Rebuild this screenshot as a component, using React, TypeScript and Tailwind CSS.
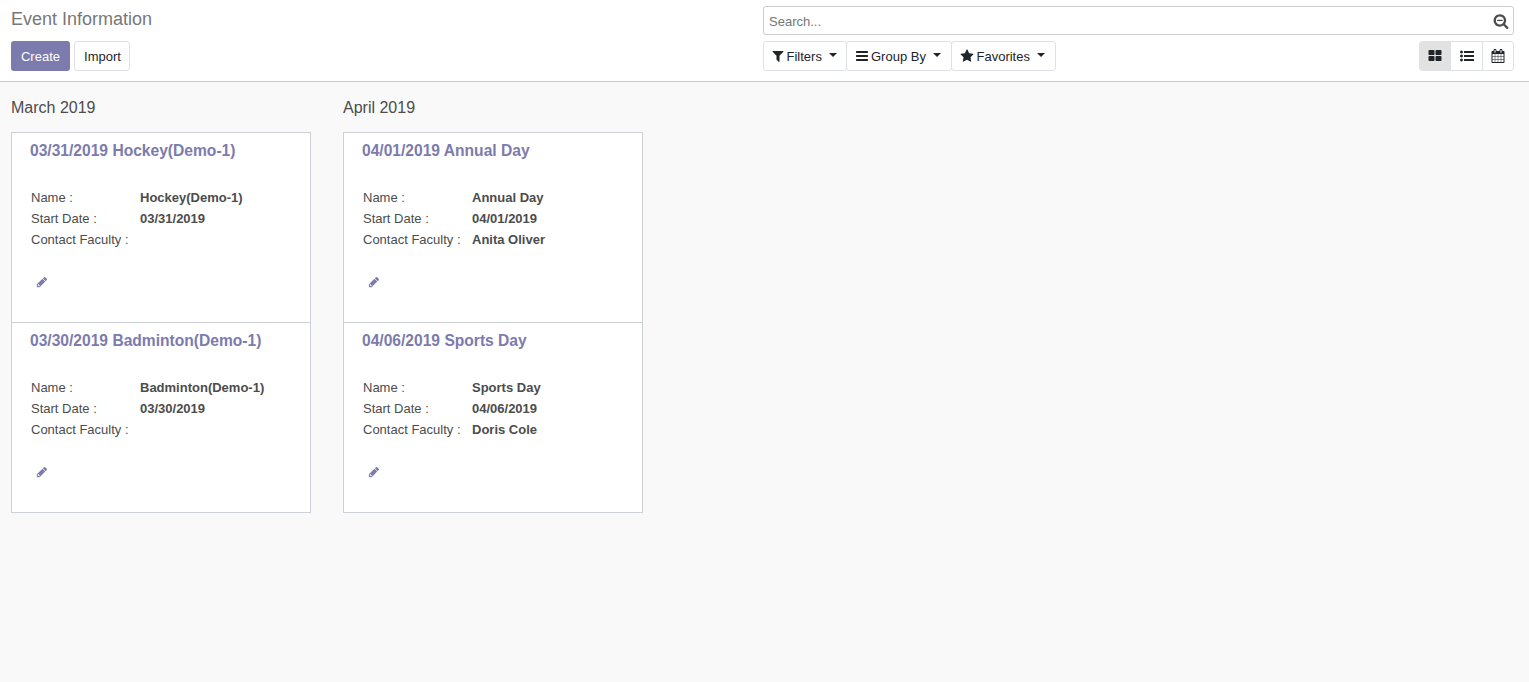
import React from "react";

const paths = {
  filter:
    "M1595 295q17 41-14 70l-493 493v742q0 42-39 59-13 5-25 5-27 0-45-19l-256-256q-19-19-19-45v-486l-493-493q-31-29-14-70 17-39 59-39h1280q42 0 59 39z",
  bars:
    "M1664 1344v128q0 26-19 45t-45 19h-1408q-26 0-45-19t-19-45v-128q0-26 19-45t45-19h1408q26 0 45 19t19 45zm0-512v128q0 26-19 45t-45 19h-1408q-26 0-45-19t-19-45v-128q0-26 19-45t45-19h1408q26 0 45 19t19 45zm0-512v128q0 26-19 45t-45 19h-1408q-26 0-45-19t-19-45v-128q0-26 19-45t45-19h1408q26 0 45 19t19 45z",
  star:
    "M1728 647q0 22-26 48l-363 354 86 500q1 7 1 20 0 21-10.5 35.5t-30.5 14.5q-19 0-40-12l-449-236-449 236q-22 12-40 12-21 0-31.5-14.5t-10.5-35.5q0-6 2-20l86-500-364-354q-25-27-25-48 0-37 56-46l502-73 225-455q19-41 49-41t49 41l225 455 502 73q56 9 56 46z",
  grid:
    "M832 1024v384q0 52-38 90t-90 38h-512q-52 0-90-38t-38-90v-384q0-52 38-90t90-38h512q52 0 90 38t38 90zm0-768v384q0 52-38 90t-90 38h-512q-52 0-90-38t-38-90v-384q0-52 38-90t90-38h512q52 0 90 38t38 90zm896 768v384q0 52-38 90t-90 38h-512q-52 0-90-38t-38-90v-384q0-52 38-90t90-38h512q52 0 90 38t38 90zm0-768v384q0 52-38 90t-90 38h-512q-52 0-90-38t-38-90v-384q0-52 38-90t90-38h512q52 0 90 38t38 90z",
  list:
    "M384 1408q0 80-56 136t-136 56-136-56-56-136 56-136 136-56 136 56 56 136zm0-512q0 80-56 136t-136 56-136-56-56-136 56-136 136-56 136 56 56 136zm1408 416v192q0 13-9.5 22.5t-22.5 9.5h-1216q-13 0-22.5-9.5t-9.5-22.5v-192q0-13 9.5-22.5t22.5-9.5h1216q13 0 22.5 9.5t9.5 22.5zm-1408-928q0 80-56 136t-136 56-136-56-56-136 56-136 136-56 136 56 56 136zm1408 416v192q0 13-9.5 22.5t-22.5 9.5h-1216q-13 0-22.5-9.5t-9.5-22.5v-192q0-13 9.5-22.5t22.5-9.5h1216q13 0 22.5 9.5t9.5 22.5zm0-512v192q0 13-9.5 22.5t-22.5 9.5h-1216q-13 0-22.5-9.5t-9.5-22.5v-192q0-13 9.5-22.5t22.5-9.5h1216q13 0 22.5 9.5t9.5 22.5z",
  calendar:
    "M192 1664h288v-288h-288v288zm352 0h320v-288h-320v288zm-352-352h288v-320h-288v320zm352 0h320v-320h-320v320zm-352-384h288v-288h-288v288zm736 736h320v-288h-320v288zm-384-736h320v-288h-320v288zm768 736h288v-288h-288v288zm-384-352h320v-320h-320v320zm-352-864v-288q0-13-9.5-22.5t-22.5-9.5h-64q-13 0-22.5 9.5t-9.5 22.5v288q0 13 9.5 22.5t22.5 9.5h64q13 0 22.5-9.5t9.5-22.5zm736 864h288v-320h-288v320zm-384-384h320v-288h-320v288zm384 0h288v-288h-288v288zm32-480v-288q0-13-9.5-22.5t-22.5-9.5h-64q-13 0-22.5 9.5t-9.5 22.5v288q0 13 9.5 22.5t22.5 9.5h64q13 0 22.5-9.5t9.5-22.5zm384-64v1280q0 52-38 90t-90 38h-1408q-52 0-90-38t-38-90v-1280q0-52 38-90t90-38h128v-96q0-66 47-113t113-47h64q66 0 113 47t47 113v96h384v-96q0-66 47-113t113-47h64q66 0 113 47t47 113v96h128q52 0 90 38t38 90z",
  pencil:
    "M491 1536l91-91-235-235-91 91v107h128v128h107zM960 416l416 416-832 832h-416v-416zm683 96q0 53-37 90l-166 166-416-416 166-165q36-38 90-38 53 0 91 38l235 234q37 39 37 91z",
  searchMinus:
    "M1088 800v64q0 13-9.5 22.5t-22.5 9.5h-576q-13 0-22.5-9.5t-9.5-22.5v-64q0-13 9.5-22.5t22.5-9.5h576q13 0 22.5 9.5t9.5 22.5zm128 32q0-185-131.5-316.5t-316.5-131.5-316.5 131.5-131.5 316.5 131.5 316.5 316.5 131.5 316.5-131.5 131.5-316.5zm512 832q0 53-37.5 90.5t-90.5 37.5q-54 0-90-38l-343-342q-179 124-399 124-143 0-273.5-55.5t-225-150-150-225-55.5-273.5 55.5-273.5 150-225 225-150 273.5-55.5 273.5 55.5 225 150 150 225 55.5 273.5q0 220-124 399l343 343q37 37 37 90z",
};

type IconName = keyof typeof paths;

function Icon({ name, className, viewBox = "0 0 1792 1792" }: { name: IconName; className: string; viewBox?: string }) {
  return (
    <svg viewBox={viewBox} className={`shrink-0 fill-current ${className}`} aria-hidden="true">
      <path d={paths[name]} />
    </svg>
  );
}

function Caret() {
  return (
    <svg viewBox="0 0 8 4" className="mb-[3px] h-1 w-2 shrink-0 fill-current" aria-hidden="true">
      <path d="M0 0h8L4 4z" />
    </svg>
  );
}

interface EventInfo {
  name: string;
  date: string;
  faculty: string;
}

const columns: { title: string; events: EventInfo[] }[] = [
  {
    title: "March 2019",
    events: [
      { name: "Hockey(Demo-1)", date: "03/31/2019", faculty: "" },
      { name: "Badminton(Demo-1)", date: "03/30/2019", faculty: "" },
    ],
  },
  {
    title: "April 2019",
    events: [
      { name: "Annual Day", date: "04/01/2019", faculty: "Anita Oliver" },
      { name: "Sports Day", date: "04/06/2019", faculty: "Doris Cole" },
    ],
  },
];

function Field({ label, value }: { label: string; value: string }) {
  return (
    <div className="flex h-[21px] items-center">
      <dt className="w-[109px] whitespace-nowrap">{label} :</dt>
      <dd className="font-bold whitespace-nowrap">{value}</dd>
    </div>
  );
}

function EventCard({ event }: { event: EventInfo }) {
  return (
    <article className="-mb-px h-[191px] border border-[#ced0d8] bg-white pt-1.5 pl-[18px]">
      <h3 className="text-[15.6px] leading-6 font-bold whitespace-nowrap text-[#7c7bad]">
        {event.date} {event.name}
      </h3>
      <dl className="mt-6 ml-px">
        <Field label="Name" value={event.name} />
        <Field label="Start Date" value={event.date} />
        <Field label="Contact Faculty" value={event.faculty} />
      </dl>
      <button className="mt-[26px] ml-1.5 block text-[#7c7bad]" aria-label="Edit">
        <Icon name="pencil" className="size-3" />
      </button>
    </article>
  );
}

export default function App() {
  return (
    <div className="flex min-h-screen flex-col bg-[#f9f9f9] font-['Liberation_Sans',Arial,sans-serif] text-[13px] text-[#4c4c4c]">
      <header className="flex h-[82px] border-b border-[#cacaca] bg-white">
        <div className="w-[763px] pl-[11px]">
          <h1 className="h-[41px] pt-[5px] text-lg leading-7 text-[#777777]">Event Information</h1>
          <div className="flex gap-1">
            <button className="h-[30px] w-[59px] rounded-[3px] bg-[#7c7bad] pt-0.5 text-white">Create</button>
            <button className="h-[30px] w-14 rounded-[3px] border border-[#dee2e6] bg-white pt-0.5 pl-px text-[#212529]">
              Import
            </button>
          </div>
        </div>
        <div className="flex-1 pt-1.5 pr-[15px]">
          <div className="flex h-[29px] items-center rounded-[3px] border border-[#cccccc] pr-1 pl-[5px]">
            <input
              className="h-full min-w-0 flex-1 bg-transparent pt-0.5 outline-none placeholder:text-[#757575]"
              placeholder="Search..."
            />
            <Icon name="searchMinus" className="size-4" />
          </div>
          <div className="mt-1.5 flex justify-between text-[#212529]">
            <div className="flex">
              <button className="flex h-[30px] w-[84px] items-center rounded-[3px] border border-[#dee2e6] pl-[7px]">
                <Icon name="filter" className="size-[14px]" />
                <span className="mr-[7px] ml-[1.5px] pt-0.5">Filters</span>
                <Caret />
              </button>
              <button className="-ml-px flex h-[30px] w-[106px] items-center rounded-[3px] border border-[#dee2e6] pl-[9px]">
                <Icon name="bars" className="h-[14px] w-3" viewBox="128 0 1536 1792" />
                <span className="mr-[7px] ml-[3px] pt-0.5">Group By</span>
                <Caret />
              </button>
              <button className="-ml-px flex h-[30px] w-[105px] items-center rounded-[3px] border border-[#dee2e6] pl-2">
                <Icon name="star" className="size-[14px]" />
                <span className="mr-[7.5px] ml-[2.5px] pt-0.5">Favorites</span>
                <Caret />
              </button>
            </div>
            <div className="flex h-[30px] w-[95px] overflow-hidden rounded-[3px] border border-[#dee2e6]">
              <button className="flex w-[30px] items-center justify-center bg-[#e2e2e2]" aria-label="Kanban">
                <Icon name="grid" className="size-[14px]" />
              </button>
              <button className="flex w-[33px] items-center justify-center border-x border-[#dee2e6]" aria-label="List">
                <Icon name="list" className="size-[14px]" />
              </button>
              <button className="flex flex-1 items-center justify-center" aria-label="Calendar">
                <Icon name="calendar" className="size-[14px]" />
              </button>
            </div>
          </div>
        </div>
      </header>
      <main className="flex gap-8 pl-[11px]">
        {columns.map((column) => (
          <section key={column.title} className="w-[300px]">
            <h2 className="h-[50px] pt-3.5 text-base leading-6">{column.title}</h2>
            {column.events.map((event) => (
              <EventCard key={event.name} event={event} />
            ))}
          </section>
        ))}
      </main>
    </div>
  );
}
